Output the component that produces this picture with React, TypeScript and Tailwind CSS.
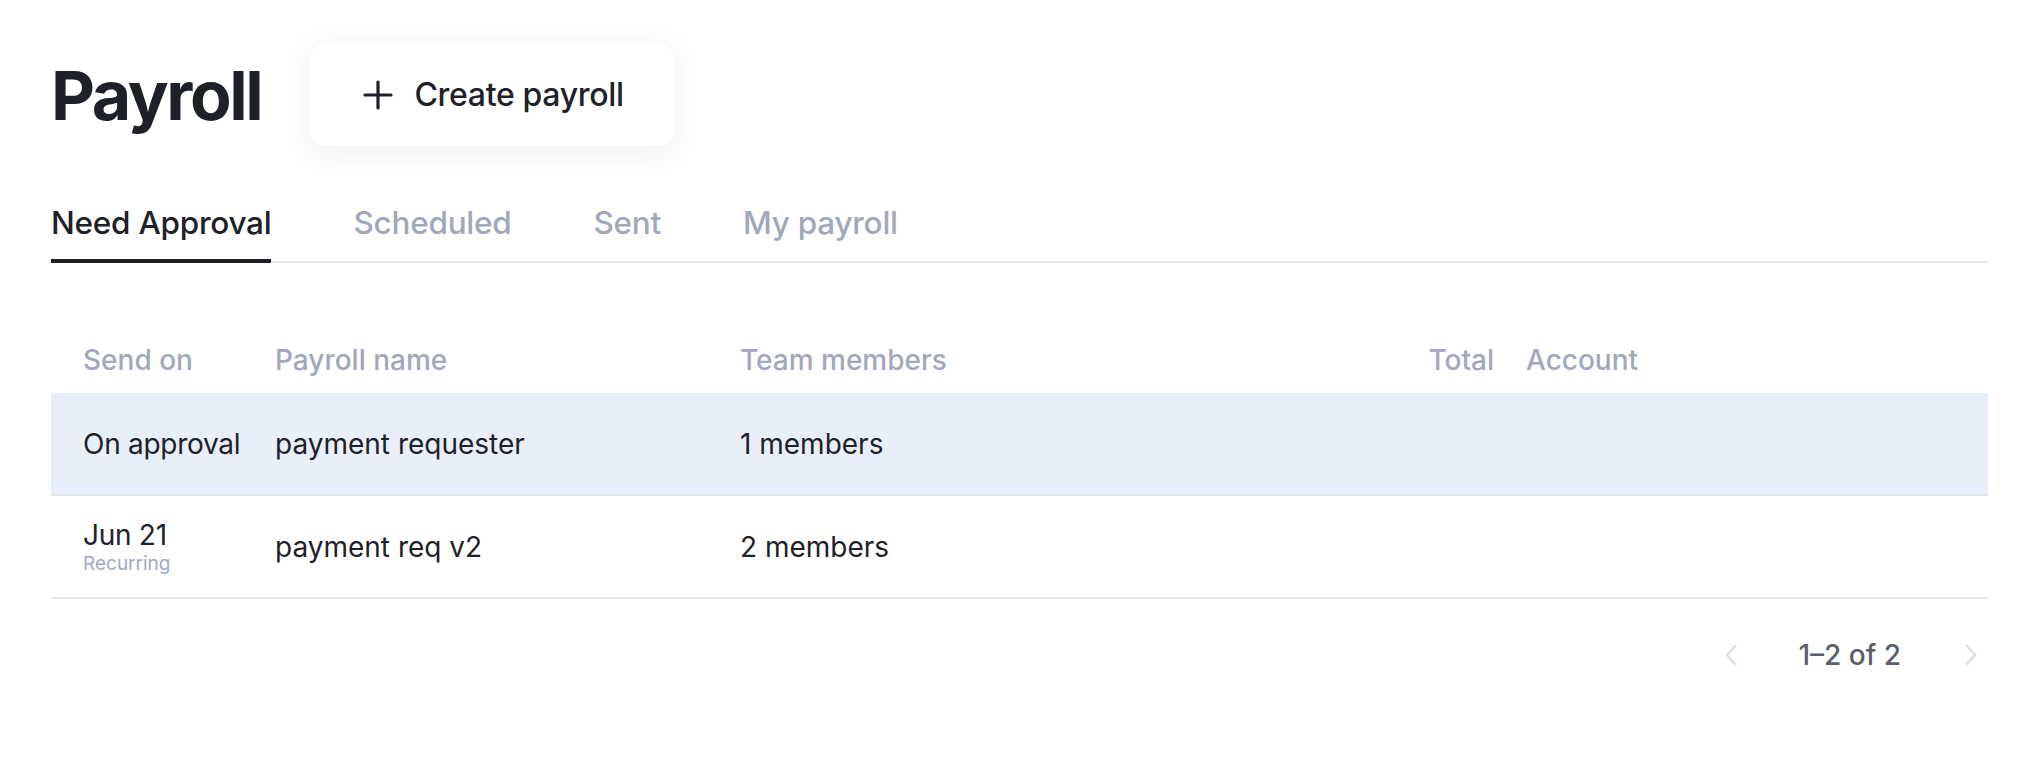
import React, { useState } from 'react';

const rows = [
  { sendOn: 'On approval', sub: '', name: 'payment requester', members: '1 members', active: true },
  { sendOn: 'Jun 21', sub: 'Recurring', name: 'payment req v2', members: '2 members', active: false },
];

const tabs = ['Need Approval', 'Scheduled', 'Sent', 'My payroll'];

const PlusIcon = () => (
  <svg width="30" height="30" viewBox="0 0 30 30" fill="none">
    <path d="M15 2v26M2 15h26" stroke="#1f2128" strokeWidth="3.2" strokeLinecap="round" />
  </svg>
);

const Chevron = ({ dir }: { dir: 'left' | 'right' }) => (
  <svg width="14" height="22" viewBox="0 0 14 22" fill="none">
    <path
      d={dir === 'left' ? 'M11 2L3 11l8 9' : 'M3 2l8 9-8 9'}
      stroke="#dcdfe7"
      strokeWidth="2.4"
      strokeLinecap="round"
      strokeLinejoin="round"
    />
  </svg>
);

export default function App() {
  const [tab, setTab] = useState(0);

  return (
    <div className="min-h-[776px] w-full bg-white pl-[51px] pr-[56px] font-['Inter',sans-serif] text-[#1f2128]">
      {/* header */}
      <div className="flex items-center gap-[49px] pt-[43px]">
        <h1 className="text-[68px] font-bold leading-none tracking-[-0.035em]">Payroll</h1>
        <button className="flex h-[103px] w-[364px] items-center gap-[21px] rounded-[16px] bg-white pl-[53px] shadow-[0_6px_28px_rgba(30,40,70,0.07)]">
          <PlusIcon />
          <span className="text-[32px] font-medium tracking-[-0.01em]">Create payroll</span>
        </button>
      </div>

      {/* tabs */}
      <div className="mt-[57px] flex gap-[82px] border-b-2 border-[#e5e6ea]">
        {tabs.map((t, i) => (
          <button
            key={t}
            onClick={() => setTab(i)}
            className={
              '-mb-[2px] border-b-4 pb-[16px] text-[31.5px] font-medium leading-[40px] tracking-[-0.008em] ' +
              (tab === i ? 'border-[#1e2026] text-[#1f2128]' : 'border-transparent text-[#a1a8bb]')
            }
          >
            {t}
          </button>
        ))}
      </div>

      {/* table */}
      <div className="mt-[64px]">
        <div className="grid h-[66px] grid-cols-[192px_465px_1fr_96px_478px] items-center text-[28px] font-medium text-[#a1a8bb]">
          <div className="pl-[32px]">Send on</div>
          <div className="pl-[32px]">Payroll name</div>
          <div className="pl-[32px]">Team members</div>
          <div className="pr-[16px] text-right">Total</div>
          <div className="pl-[16px]">Account</div>
        </div>
        {rows.map((r) => (
          <div
            key={r.name}
            className={
              'grid h-[103px] grid-cols-[192px_465px_1fr_96px_478px] items-center border-b-2 border-[#e4e6ea] text-[28px] ' +
              (r.active ? 'bg-[#e8eefa]' : 'bg-white')
            }
          >
            <div className="whitespace-nowrap pl-[32px]">
              <div className="leading-[34px] tracking-[-0.01em]">{r.sendOn}</div>
              {r.sub && <div className="text-[19px] leading-[24px] text-[#a3a9bf]">{r.sub}</div>}
            </div>
            <div className="pl-[32px]">{r.name}</div>
            <div className="pl-[32px]">{r.members}</div>
            <div />
            <div />
          </div>
        ))}
      </div>

      {/* pagination */}
      <div className="mt-[35px] flex items-center justify-end">
        <button className="mr-[60px]"><Chevron dir="left" /></button>
        <span className="text-[28px] font-medium text-[#5b5f6c]">1–2 of 2</span>
        <button className="ml-[63px] mr-[10px]"><Chevron dir="right" /></button>
      </div>
    </div>
  );
}
